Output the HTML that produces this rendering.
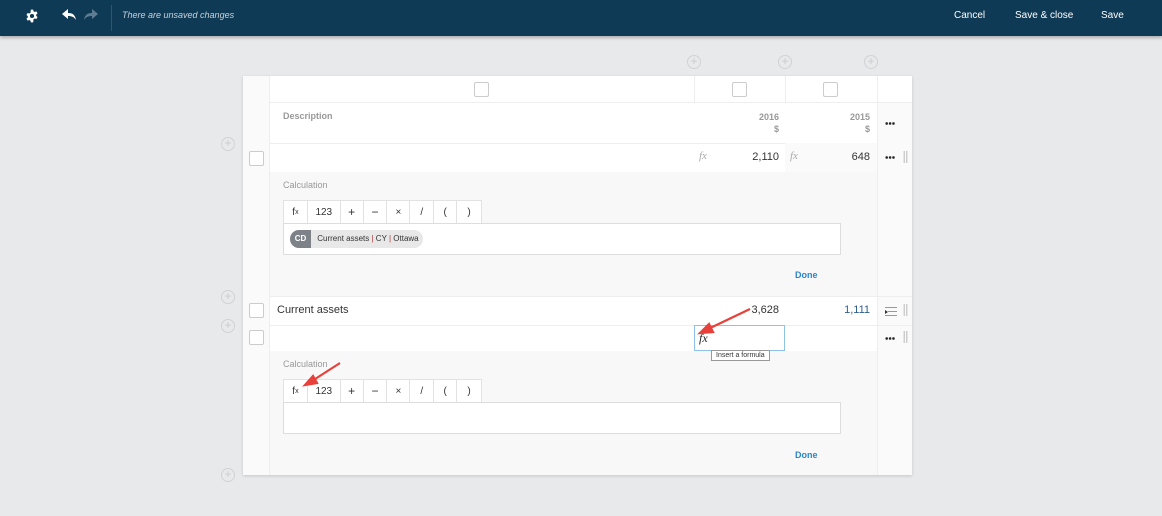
<!DOCTYPE html>
<html><head><meta charset="utf-8"><style>
*{box-sizing:border-box;margin:0;padding:0}
body{width:1162px;height:516px;background:#e8e9eb;font-family:"Liberation Sans",sans-serif;position:relative;overflow:hidden;font-size:11px;color:#333}
.a{position:absolute}
.top{left:0;top:0;width:1162px;height:36px;background:#0f3a55;box-shadow:0 2px 3px rgba(0,0,0,.25)}
.tb{color:#fff;font-size:10px;top:10px}
.plus{width:14px;height:14px;border:1px solid #d0d2d5;border-radius:50%;color:#ccc;font-size:12px;line-height:11px;text-align:center}
.cb{width:15px;height:15px;border:1px solid #ccc;background:#fff;border-radius:2px}
.panel{left:243px;top:76px;width:669px;height:399px;background:#fff;box-shadow:0 1px 3px rgba(0,0,0,.15)}
.hl{height:1px;background:#eee}
.calc{background:#f8f8f8}
.tool{height:24px;border:1px solid #e2e2e2;background:#fff;display:flex}
.tool span{border-right:1px solid #e2e2e2;display:flex;align-items:center;justify-content:center;font-size:10px;color:#333}
.tool span:last-child{border-right:none}
.box{height:32px;border:1px solid #ddd;background:#fff}
.done{color:#2a86c9;font-weight:bold;font-size:9px}
.dots{width:10px;height:3px;background:radial-gradient(circle,#222 1.2px,transparent 1.4px) 0 0/3.4px 3px repeat-x}
.grip{width:5px;height:12px;background:radial-gradient(circle,#aaa .6px,transparent .8px) 0 0/2.5px 2px}
.fx{font-family:"Liberation Serif",serif;font-style:italic;color:#aaa;font-size:11px}
</style></head><body>
<div class="a top"></div>
<svg class="a" style="left:25px;top:9px" width="14" height="14" viewBox="0 0 24 24"><path fill="#fff" fill-rule="evenodd" d="M10 1h4l.6 3a8 8 0 012 1.1l2.9-1 2 3.4-2.3 2a8 8 0 010 2.3l2.3 2-2 3.4-2.9-1a8 8 0 01-2 1.1L14 23h-4l-.6-3a8 8 0 01-2-1.1l-2.9 1-2-3.4 2.3-2a8 8 0 010-2.3l-2.3-2 2-3.4 2.9 1a8 8 0 012-1.1zM12 8.5a3.5 3.5 0 100 7 3.5 3.5 0 000-7z"/></svg>
<svg class="a" style="left:62px;top:9px" width="14" height="12" viewBox="0 0 14 12"><path fill="#fff" d="M6 0L0 5l6 5V7c4 0 6 1 8 4-1-5-3-7-8-7z"/></svg>
<svg class="a" style="left:84px;top:9px" width="14" height="12" viewBox="0 0 14 12"><path fill="#5d7c91" d="M8 0l6 5-6 5V7C4 7 2 8 0 11 1 6 3 4 8 4z"/></svg>
<div class="a" style="left:111px;top:5px;width:1px;height:26px;background:#2d5670"></div>
<div class="a" style="left:122px;top:10px;color:#c8d3db;font-size:9px;font-style:italic">There are unsaved changes</div>
<div class="a tb" style="left:954px">Cancel</div>
<div class="a tb" style="left:1015px">Save &amp; close</div>
<div class="a tb" style="left:1101px">Save</div>

<div class="a plus" style="left:687px;top:55px">+</div>
<div class="a plus" style="left:778px;top:55px">+</div>
<div class="a plus" style="left:864px;top:55px">+</div>
<div class="a plus" style="left:221px;top:137px">+</div>
<div class="a plus" style="left:221px;top:290px">+</div>
<div class="a plus" style="left:221px;top:319px">+</div>
<div class="a plus" style="left:221px;top:468px">+</div>

<div class="a panel">
 <div class="a" style="left:0;top:0;width:27px;height:399px;background:#fafafa;border-right:1px solid #eee"></div>
 <div class="a" style="left:634px;top:27px;width:35px;height:372px;background:#fafafa;border-left:1px solid #eee"></div>
 <div class="a" style="left:27px;top:0;width:642px;height:27px;border-bottom:1px solid #eee"></div>
 <div class="a" style="left:451px;top:0;width:1px;height:27px;background:#eee"></div>
 <div class="a" style="left:542px;top:0;width:1px;height:27px;background:#eee"></div>
 <div class="a" style="left:634px;top:0;width:1px;height:27px;background:#eee"></div>
 <div class="a cb" style="left:231px;top:6px"></div>
 <div class="a cb" style="left:489px;top:6px"></div>
 <div class="a cb" style="left:580px;top:6px"></div>
 <div class="a" style="left:40px;top:35px;color:#999;font-weight:bold;font-size:9px">Description</div>
 <div class="a" style="left:500px;top:35px;width:36px;text-align:right;color:#999;font-weight:bold;font-size:9px;line-height:12px">2016<br>$</div>
 <div class="a" style="left:590px;top:35px;width:37px;text-align:right;color:#999;font-weight:bold;font-size:9px;line-height:12px">2015<br>$</div>
 <div class="a dots" style="left:642px;top:46px"></div>
 <div class="a hl" style="left:27px;top:67px;width:607px"></div>
 <div class="a cb" style="left:6px;top:75px"></div>
 <div class="a" style="left:542px;top:67px;width:92px;height:29px;background:#fafafa"></div>
 <div class="a fx" style="left:456px;top:74px">fx</div>
 <div class="a" style="left:490px;top:75px;width:46px;text-align:right;font-size:11px">2,110</div>
 <div class="a fx" style="left:547px;top:74px">fx</div>
 <div class="a" style="left:590px;top:75px;width:37px;text-align:right;font-size:11px">648</div>
 <div class="a dots" style="left:642px;top:80px"></div>
 <div class="a grip" style="left:660px;top:75px"></div>
 <div class="a calc" style="left:27px;top:96px;width:607px;height:124px"></div>
 <div class="a" style="left:40px;top:104px;color:#999;font-size:9px">Calculation</div>
 <div class="a tool" style="left:40px;top:124px;width:199px">
  <span style="width:24px">f<sub style="font-size:7px">x</sub></span><span style="width:33px">123</span><span style="width:23px;font-size:12px">+</span><span style="width:24px;font-size:12px">−</span><span style="width:23px">×</span><span style="width:24px">/</span><span style="width:23px">(</span><span style="width:24px">)</span>
 </div>
 <div class="a box" style="left:40px;top:147px;width:558px"></div>
 <div class="a" style="left:47px;top:154px;height:18px;width:133px;background:#e8e8e8;border-radius:9px;font-size:8px;line-height:18px">
  <span style="display:inline-block;width:21px;height:18px;background:#7c8287;color:#fff;border-radius:9px 0 0 9px;text-align:center;font-weight:bold">CD</span>
  <span style="padding-left:4px">Current assets <span style="color:#b33">|</span> CY <span style="color:#b33">|</span> Ottawa</span>
 </div>
 <div class="a done" style="left:552px;top:194px">Done</div>
 <div class="a hl" style="left:27px;top:220px;width:642px"></div>
 <div class="a cb" style="left:6px;top:227px"></div>
 <div class="a" style="left:34px;top:228px;font-size:11px">Current assets</div>
 <div class="a" style="left:490px;top:228px;width:46px;text-align:right;font-size:11px">3,628</div>
 <div class="a" style="left:590px;top:228px;width:37px;text-align:right;font-size:11px;color:#2d5d8a">1,111</div>
 <div class="a" style="left:642px;top:231px;width:12px;height:9px;border-top:1px solid #999;border-bottom:1px solid #999"><div style="position:absolute;left:3px;top:3px;width:9px;height:1px;background:#999"></div><div style="position:absolute;left:0;top:2px;border-left:3px solid #333;border-top:2px solid transparent;border-bottom:2px solid transparent"></div></div>
 <div class="a grip" style="left:660px;top:228px"></div>
 <div class="a hl" style="left:27px;top:249px;width:642px"></div>
 <div class="a cb" style="left:6px;top:254px"></div>
 <div class="a" style="left:451px;top:249px;width:91px;height:26px;border:1px solid #8cc3e6;background:#fff"></div>
 <div class="a" style="left:456px;top:255px;font-family:'Liberation Serif',serif;font-style:italic;font-size:12px;color:#222">fx</div>
 <div class="a dots" style="left:642px;top:261px"></div>
 <div class="a grip" style="left:660px;top:255px"></div>
 <div class="a calc" style="left:27px;top:275px;width:607px;height:124px"></div>
 <div class="a" style="left:468px;top:274px;border:1px solid #999;background:#fff;font-size:7px;padding:1px 4px;z-index:2">Insert a formula</div>
 <div class="a" style="left:40px;top:283px;color:#999;font-size:9px">Calculation</div>
 <div class="a tool" style="left:40px;top:303px;width:199px">
  <span style="width:24px">f<sub style="font-size:7px">x</sub></span><span style="width:33px">123</span><span style="width:23px;font-size:12px">+</span><span style="width:24px;font-size:12px">−</span><span style="width:23px">×</span><span style="width:24px">/</span><span style="width:23px">(</span><span style="width:24px">)</span>
 </div>
 <div class="a box" style="left:40px;top:326px;width:558px"></div>
 <div class="a done" style="left:552px;top:374px">Done</div>
</div>
<svg class="a" style="left:0;top:0" width="1162" height="516">
 <g stroke="#e8403a" stroke-width="2.2" fill="#e8403a">
  <line x1="750" y1="309" x2="706" y2="330"/><polygon points="700,333 709,324 713,332"/>
  <line x1="340" y1="363" x2="312" y2="381"/><polygon points="305,385 313,376 317,383"/>
 </g>
</svg>
</body></html>
